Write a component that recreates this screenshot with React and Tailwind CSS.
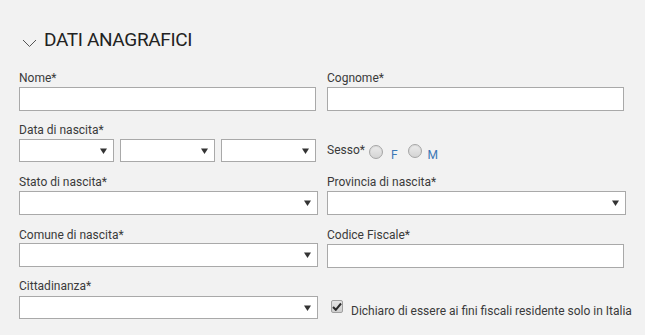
import React from "react";

function Arrow() {
  return (
    <svg width="7" height="6" viewBox="0 0 7 6">
      <path d="M0 0.5 H7 L3.5 6 Z" fill="#333" />
    </svg>
  );
}

function Label({ children }) {
  return (
    <div className="h-[14px] leading-[14px] text-[12px] text-[#3a3a3a] whitespace-nowrap">
      {children}
    </div>
  );
}

function TextInput({ className = "" }) {
  return (
    <div
      className={`h-6 w-[297px] bg-white border border-[#a9a9a9] ${className}`}
    />
  );
}

function Select({ className = "w-[299px] h-6" }) {
  return (
    <div
      className={`flex items-center justify-end pr-[6px] bg-white border border-[#a9a9a9] ${className}`}
    >
      <Arrow />
    </div>
  );
}

function Radio({ className = "" }) {
  return (
    <span
      className={`block w-[14px] h-[14px] rounded-full border border-[#a5a5a5] bg-gradient-to-b from-[#ececec] to-[#d4d4d4] shadow-[inset_0_1px_1px_rgba(0,0,0,0.08)] ${className}`}
    />
  );
}

export default function App() {
  return (
    <div className="flex w-[657px] h-[335px] bg-white font-['Roboto',sans-serif]">
      <div className="w-[645px] h-full bg-[#f2f2f2] pl-[19px]">
        {/* Heading */}
        <div className="flex items-center mt-[28px] h-6">
          <svg width="15" height="9" viewBox="0 0 15 9" className="ml-[3px] mt-[6px]">
            <polyline points="1,1 7.5,7.5 14,1" fill="none" stroke="#555" strokeWidth="1" />
          </svg>
          <h2 className="ml-[7px] text-[19px] leading-6 text-[#222] tracking-[-0.35px]">
            DATI ANAGRAFICI
          </h2>
        </div>

        {/* Rows */}
        <div className="mt-[19px] grid grid-cols-[299px_299px] gap-x-[9px]">
          {/* Nome / Cognome */}
          <div>
            <Label>Nome*</Label>
            <TextInput className="mt-[2px]" />
          </div>
          <div>
            <Label>Cognome*</Label>
            <TextInput className="mt-[2px]" />
          </div>

          {/* Data / Sesso */}
          <div className="mt-[12px]">
            <Label>Data di nascita*</Label>
            <div className="mt-[2px] flex gap-[6px]">
              <Select className="w-[95px] h-[23px]" />
              <Select className="w-[95px] h-[23px]" />
              <Select className="w-[95px] h-[23px]" />
            </div>
          </div>
          <div className="mt-[12px] flex items-start text-[12px] leading-[14px]">
            <span className="mt-[20px] text-[#3a3a3a]">Sesso*</span>
            <Radio className="mt-[22px] ml-[4px]" />
            <span className="mt-[25px] ml-[8px] text-[#3b78b5]">F</span>
            <Radio className="mt-[21px] ml-[10px]" />
            <span className="mt-[25px] ml-[6px] text-[#3b78b5]">M</span>
          </div>

          {/* Stato / Provincia */}
          <div className="mt-[13px]">
            <Label>Stato di nascita*</Label>
            <Select className="mt-[2px] w-[299px] h-6" />
          </div>
          <div className="mt-[13px]">
            <Label>Provincia di nascita*</Label>
            <Select className="mt-[2px] w-[299px] h-6" />
          </div>

          {/* Comune / Codice */}
          <div className="mt-[13px]">
            <Label>Comune di nascita*</Label>
            <Select className="mt-[1px] w-[299px] h-6" />
          </div>
          <div className="mt-[13px]">
            <Label>Codice Fiscale*</Label>
            <TextInput className="mt-[2px]" />
          </div>

          {/* Cittadinanza / Checkbox */}
          <div className="mt-[11px]">
            <Label>Cittadinanza*</Label>
            <Select className="mt-[3px] w-[299px] h-[23px]" />
          </div>
          <div className="mt-[11px] flex items-start">
            <span className="mt-[21px] ml-[4px] flex items-center justify-center w-[13px] h-[13px] rounded-[2px] border border-[#a0a0a0] bg-gradient-to-b from-[#e4e4e4] to-[#cfcfcf]">
              <svg width="10" height="9" viewBox="0 0 10 9">
                <path d="M1 5 L3.8 7.8 L9 1.5" fill="none" stroke="#2a2a2a" strokeWidth="2" />
              </svg>
            </span>
            <span className="mt-[25px] ml-[8px] text-[12px] leading-[14px] text-[#3a3a3a] whitespace-nowrap">
              Dichiaro di essere ai fini fiscali residente solo in Italia
            </span>
          </div>
        </div>
      </div>
    </div>
  );
}
